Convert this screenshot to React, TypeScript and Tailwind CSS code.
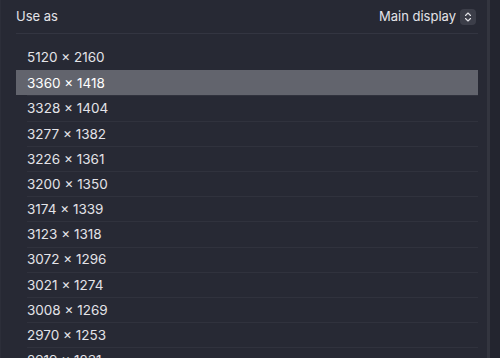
import { ChevronsUpDown } from 'lucide-react';

const sizes = [
  '5120 × 2160',
  '3360 × 1418',
  '3328 × 1404',
  '3277 × 1382',
  '3226 × 1361',
  '3200 × 1350',
  '3174 × 1339',
  '3123 × 1318',
  '3072 × 1296',
  '3021 × 1274',
  '3008 × 1269',
  '2970 × 1253',
  '2919 × 1231',
];

const App = () => {
  const selected = 1;

  return (
    <div className="w-[500px] h-[358px] overflow-hidden bg-[#272934] flex text-[13px] text-[#e3e3e8] font-['Inter','Liberation_Sans',sans-serif]">
      <div className="w-[487px] border-l border-[#2c2e39] pl-[15px] pr-[9px] flex flex-col">
        <header className="h-[34px] shrink-0 flex items-center justify-between border-b border-[#333541] pr-[2px]">
          <span className="pt-[1px]">Use as</span>
          <div className="flex items-center gap-[4px]">
            <span>Main display</span>
            <span className="w-[16px] h-[16px] rounded-[4px] bg-[#3c3e49] flex items-center justify-center">
              <ChevronsUpDown size={12} strokeWidth={2.2} />
            </span>
          </div>
        </header>

        <ul className="mt-[11px] shrink-0 text-[13.5px]">
          {sizes.map((s, i) => (
            <li
              key={s}
              className={
                i === selected
                  ? 'h-[25.2px] flex items-center pl-[11px] bg-[#62646d] text-white'
                  : 'h-[25.2px] flex items-center pl-[11px]'
              }
            >
              <div
                className={
                  i === selected || i === selected - 1
                    ? 'flex-1 h-full flex items-center'
                    : 'flex-1 h-full flex items-center border-t border-[#30323d]'
                }
              >
                {s}
              </div>
            </li>
          ))}
        </ul>
      </div>
      <div className="w-[3px] bg-[#33353f]" />
      <div className="flex-1 bg-[#23252f]" />
    </div>
  );
};

export default App;
